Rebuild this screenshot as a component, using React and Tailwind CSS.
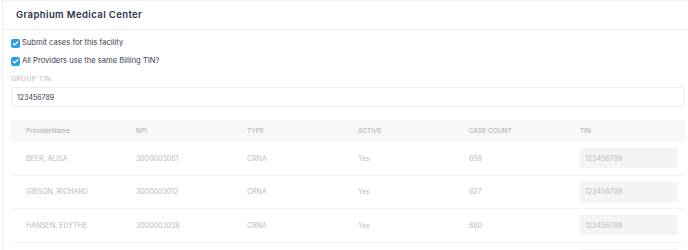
import { Check } from 'lucide-react'

const providers = [
  { name: 'BEER, ALISA', npi: '3000003061', type: 'CRNA', active: 'Yes', count: '659', tin: '123456789' },
  { name: 'GIBSON, RICHARD', npi: '3000003012', type: 'CRNA', active: 'Yes', count: '627', tin: '123456789' },
  { name: 'HANSEN, EDYTHE', npi: '3000003038', type: 'CRNA', active: 'Yes', count: '680', tin: '123456789' },
]

const cols = 'grid grid-cols-[110px_111px_111px_111px_111px_1fr]'

function CheckBox({ label }) {
  return (
    <label className="h-[18px] flex items-center gap-[2px] text-[7.6px] leading-none text-[#3b4150]">
      <span className="w-[9px] h-[9px] rounded-[2px] bg-[#2ba2e2] flex items-center justify-center">
        <Check className="w-[7px] h-[7px] text-white" strokeWidth={4} />
      </span>
      {label}
    </label>
  )
}

export default function App() {
  return (
    <div className="w-[688px] h-[250px] overflow-hidden bg-white font-['Inter',sans-serif]">
      <div className="ml-[2px] border-l border-t border-[#f0f0f0] h-full">
        <div className="h-[29px] flex items-center px-[13px] border-b border-[#eeeeee]">
          <h1 className="text-[9.5px] tracking-[0.4px] font-semibold leading-none text-[#2a3247]">Graphium Medical Center</h1>
        </div>

        <div className="pl-[8px] pr-[3px] pt-[4px]">
          <div className="flex flex-col">
            <CheckBox label="Submit cases for this facility" />
            <CheckBox label="All Providers use the same Billing TIN?" />
          </div>

          <div className="mt-[5px] h-[8px] flex items-center text-[6.5px] leading-none uppercase text-[#b5b8be] tracking-[0.5px]">
            Group TIN
          </div>
          <div className="mt-[4px] h-[20px] border border-[#efefef] rounded-[2px] flex items-center px-[5px] text-[7px] leading-none text-[#3b4150]">
            123456789
          </div>

          <div className="mt-[13px]">
            <div className={`${cols} bg-[#f7f7f7] h-[22px] items-center text-[6.5px] leading-none text-[#a8abb2]`}>
              <div className="pl-[15px]">ProviderName</div>
              <div className="pl-[15px]">NPI</div>
              <div className="pl-[15px]">TYPE</div>
              <div className="pl-[15px]">ACTIVE</div>
              <div className="pl-[15px]">CASE COUNT</div>
              <div className="pl-[15px]">TIN</div>
            </div>
            {providers.map((p) => (
              <div
                key={p.name}
                className={`${cols} h-[33.5px] items-center border-b border-[#f3f3f3] text-[7px] leading-none text-[#b8bbc1]`}
              >
                <div className="pl-[15px]">{p.name}</div>
                <div className="pl-[15px]">{p.npi}</div>
                <div className="pl-[15px]">{p.type}</div>
                <div className="pl-[15px]">{p.active}</div>
                <div className="pl-[15px]">{p.count}</div>
                <div className="pl-[15px] pr-[7px]">
                  <div className="h-[20px] bg-[#f4f4f4] rounded-[2px] flex items-center px-[5px]">{p.tin}</div>
                </div>
              </div>
            ))}
            {/* next row starts just below the fold */}
            <div className={`${cols} h-[33.5px] items-center`}>
              <div className="col-start-6 pl-[15px] pr-[7px]">
                <div className="h-[20px] bg-[#f4f4f4] rounded-[2px]" />
              </div>
            </div>
          </div>
        </div>
      </div>
    </div>
  )
}
